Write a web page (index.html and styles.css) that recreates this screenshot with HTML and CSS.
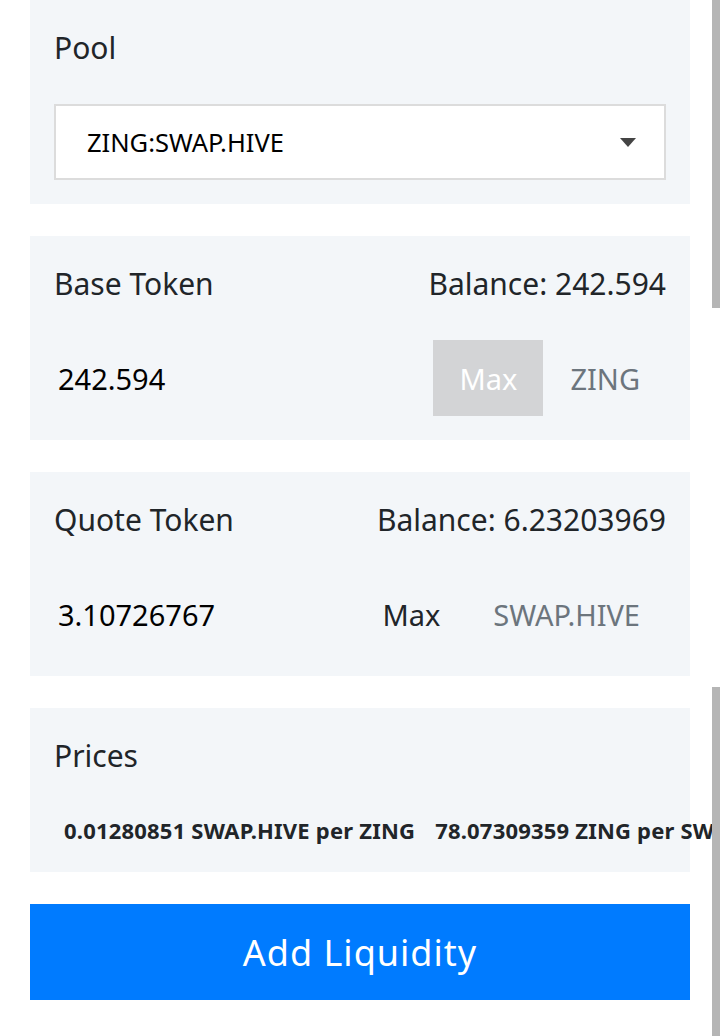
FILE: index.html
```html
<!DOCTYPE html>
<html lang="en">
<head>
    <meta charset="UTF-8">
    <meta name="viewport" content="width=device-width, initial-scale=1.0">
    <title>Add Liquidity</title>
    <link rel="stylesheet" href="styles.css">
</head>
<body>
    <div class="container">
        <div class="card">
            <label class="card-label" for="pool">Pool</label>
            <div class="select-box" id="pool">
                <span>ZING:SWAP.HIVE</span>
                <svg class="caret" width="16" height="9" viewBox="0 0 16 9"><path d="M0 0H16L8 9Z" fill="#444"/></svg>
            </div>
        </div>

        <div class="card">
            <div class="card-head">
                <span class="card-label">Base Token</span>
                <span class="card-label">Balance: 242.594</span>
            </div>
            <div class="token-row">
                <input class="amount" type="text" value="242.594">
                <button class="max-btn filled">Max</button>
                <span class="symbol">ZING</span>
            </div>
        </div>

        <div class="card">
            <div class="card-head">
                <span class="card-label">Quote Token</span>
                <span class="card-label">Balance: 6.23203969</span>
            </div>
            <div class="token-row">
                <input class="amount" type="text" value="3.10726767">
                <button class="max-btn">Max</button>
                <span class="symbol">SWAP.HIVE</span>
            </div>
        </div>

        <div class="card prices">
            <span class="card-label">Prices</span>
            <div class="price-row">
                <span>0.01280851 SWAP.HIVE per ZING</span>
                <span>78.07309359 ZING per SWAP.HIVE</span>
            </div>
        </div>

        <button class="submit">Add Liquidity</button>
    </div>

    <div class="scroll-thumb top"></div>
    <div class="scroll-thumb bottom"></div>
</body>
</html>
```

FILE: styles.css
```css
:root {
    --panel-color: #f3f6f9;
    --text-color: #212529;
    --muted-color: #6c757d;
    --primary-color: #007bff;
    --border-color: #dcdcdc;
}
html, body {
    overflow: hidden;
}
body {
    margin: 0;
    width: 720px;
    height: 1036px;
    font-family: 'Noto Sans', 'Open Sans', sans-serif;
    color: var(--text-color);
    background-color: #fff;
}
.container {
    padding: 0 30px;
}
.card {
    background-color: var(--panel-color);
    padding: 27px 24px 24px;
    margin-bottom: 32px;
}
.card-label {
    display: block;
    font-size: 30px;
    line-height: 42px;
    margin-bottom: 35px;
}
.card-head {
    display: flex;
    justify-content: space-between;
}
.select-box {
    height: 76px;
    box-sizing: border-box;
    border: 2px solid var(--border-color);
    background-color: #fff;
    display: flex;
    align-items: center;
    justify-content: space-between;
    padding: 0 28px 0 31px;
    font-size: 25.5px;
    color: #000;
}
.caret {
    display: block;
}
.token-row {
    display: flex;
    align-items: center;
    height: 76px;
}
.amount {
    flex: 1;
    min-width: 0;
    border: none;
    background: transparent;
    font-family: inherit;
    font-size: 29px;
    color: #000;
    padding: 0 4px;
    outline: none;
}
.max-btn {
    height: 76px;
    padding: 0 26px;
    border: none;
    background: transparent;
    font-family: inherit;
    font-size: 29px;
    color: var(--text-color);
}
.max-btn.filled {
    width: 110px;
    padding: 0;
    background-color: #d3d4d6;
    color: #fff;
}
.symbol {
    padding: 0 26px 0 27px;
    font-size: 29px;
    color: var(--muted-color);
}
.prices .card-label {
    margin-bottom: 36px;
}
.price-row {
    display: flex;
    gap: 20px;
    padding-left: 10px;
    white-space: nowrap;
    font-size: 22px;
    font-weight: 700;
    letter-spacing: 0.2px;
    line-height: 35px;
    margin-right: -300px;
}
.submit {
    display: block;
    width: 100%;
    height: 96px;
    border: none;
    background-color: var(--primary-color);
    color: #fff;
    font-family: inherit;
    font-size: 36px;
    letter-spacing: 1px;
}
.scroll-thumb {
    position: absolute;
    right: 0;
    width: 8px;
    background-color: #b5b5b5;
}
.scroll-thumb.top {
    top: 0;
    height: 308px;
}
.scroll-thumb.bottom {
    top: 687px;
    height: 349px;
}
```
